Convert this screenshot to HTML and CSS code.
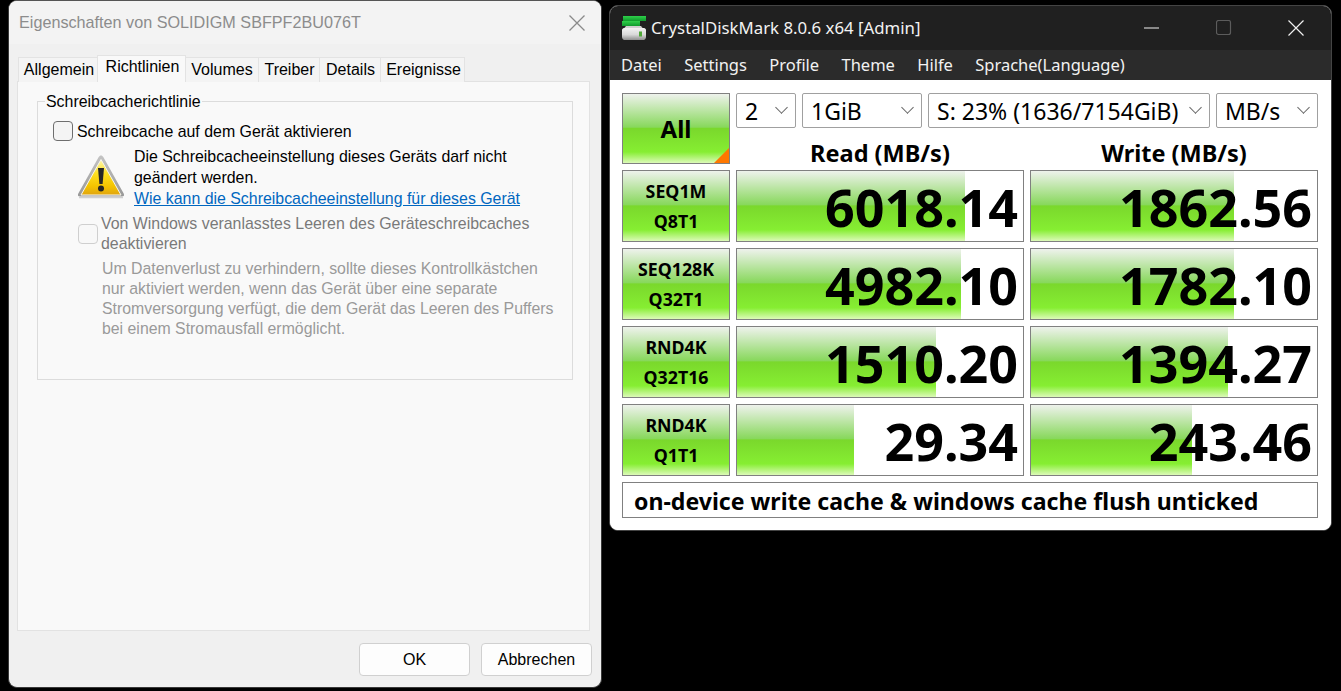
FILE: index.html
```html
<!DOCTYPE html>
<html lang="de">
<head>
<meta charset="utf-8">
<title>Eigenschaften und CrystalDiskMark</title>
<link rel="stylesheet" href="styles.css">
</head>
<body>
<section class="props">
  <header class="props-title">
    <span class="props-title-text">Eigenschaften von SOLIDIGM SBFPF2BU076T</span>
    <svg class="props-close" width="16" height="16" viewBox="0 0 16 16"><path d="M.5.5l15 15M15.5.5l-15 15" stroke="#8a8a8a" stroke-width="1.3" fill="none"/></svg>
  </header>
  <nav class="tabs">
    <span class="tab tab-allgemein">Allgemein</span>
    <span class="tab tab-active">Richtlinien</span>
    <span class="tab tab-volumes">Volumes</span>
    <span class="tab tab-treiber">Treiber</span>
    <span class="tab tab-details">Details</span>
    <span class="tab tab-ereignisse">Ereignisse</span>
  </nav>
  <div class="panel">
    <fieldset class="group">
      <legend class="group-legend">Schreibcacherichtlinie</legend>
      <div class="check-row check-first">
        <span class="box"></span>
        <span class="check-label">Schreibcache auf dem Gerät aktivieren</span>
      </div>
      <div class="warn">
        <svg class="warn-icon" width="50" height="46" viewBox="0 0 50 46">
          <defs>
            <linearGradient id="wy" x1="0" y1="0" x2="0" y2="1">
              <stop offset="0" stop-color="#fff6b0"/>
              <stop offset=".4" stop-color="#fde020"/>
              <stop offset=".75" stop-color="#f4c400"/>
              <stop offset="1" stop-color="#e0a410"/>
            </linearGradient>
            <linearGradient id="wb" x1="0" y1="0" x2="0" y2="1">
              <stop offset="0" stop-color="#c4c4c4"/>
              <stop offset="1" stop-color="#989898"/>
            </linearGradient>
          </defs>
          <path d="M25 1.500c1 0 1.700.6 2.300 1.600l20.400 36.500c.9 1.700.2 3-1.700 3H4c-1.900 0-2.600-1.300-1.700-3L22.700 3.100c.6-1 1.300-1.600 2.300-1.600z" fill="url(#wb)"/>
          <path d="M25 5.500L45 41H5z" fill="url(#wy)" stroke="#f6f6f0" stroke-width="1"/>
          <path d="M3 43.500h44" stroke="#d0d0d0" stroke-width="1.500"/>
          <path d="M22 14h6l-1.400 16h-3.200z" fill="#262626"/>
          <circle cx="25" cy="34.500" r="3" fill="#262626"/>
        </svg>
        <div class="warn-text">
          <p class="warn-line">Die Schreibcacheeinstellung dieses Geräts darf nicht geändert werden.</p>
          <a class="warn-link" href="#">Wie kann die Schreibcacheeinstellung für dieses Gerät</a>
        </div>
      </div>
      <div class="check-row check-disabled">
        <span class="box box-disabled"></span>
        <span class="check-long">Von Windows veranlasstes Leeren des Geräteschreibcaches deaktivieren</span>
      </div>
      <p class="hint">Um Datenverlust zu verhindern, sollte dieses Kontrollkästchen nur aktiviert werden, wenn das Gerät über eine separate Stromversorgung verfügt, die dem Gerät das Leeren des Puffers bei einem Stromausfall ermöglicht.</p>
    </fieldset>
  </div>
  <footer class="props-foot">
    <button class="btn">OK</button>
    <button class="btn">Abbrechen</button>
  </footer>
</section>

<section class="cdm">
  <header class="cdm-title">
    <svg class="cdm-logo" width="26" height="24" viewBox="0 0 26 24">
      <defs>
        <linearGradient id="dk" x1="0" y1="0" x2="0" y2="1">
          <stop offset="0" stop-color="#f2f2f2"/>
          <stop offset=".55" stop-color="#d8d8d8"/>
          <stop offset="1" stop-color="#8e8e8e"/>
        </linearGradient>
        <linearGradient id="gb" x1="0" y1="0" x2="0" y2="1">
          <stop offset="0" stop-color="#2fd04a"/>
          <stop offset="1" stop-color="#0f9a2c"/>
        </linearGradient>
      </defs>
      <path d="M2 0h23v5H2z" fill="url(#gb)"/>
      <path d="M1 5h18v5H1z" fill="url(#gb)"/>
      <path d="M5 10h15l2 2.500H3z" fill="#cfcfcf"/>
      <path d="M3 12h20c1 0 2 1 2 2v7c0 1.500-1 3-2.500 3h-19C2 24 1 22.500 1 21v-7c0-1 1-2 2-2z" fill="url(#dk)"/>
      <path d="M18 15.500h3v5h-3z" fill="#4fa838"/>
    </svg>
    <span class="cdm-title-text">CrystalDiskMark 8.0.6 x64 [Admin]</span>
    <div class="cdm-controls">
      <svg width="16" height="16" viewBox="0 0 16 16"><path d="M0 8h15" stroke="#f0f0f0" stroke-width="1.100"/></svg>
      <svg width="16" height="16" viewBox="0 0 16 16"><rect x=".5" y=".5" width="14" height="14" rx="2" fill="none" stroke="#5c5c5c" stroke-width="1.200"/></svg>
      <svg width="16" height="16" viewBox="0 0 16 16"><path d="M.5.500l15 15M15.500.500l-15 15" stroke="#f0f0f0" stroke-width="1.200" fill="none"/></svg>
    </div>
  </header>
  <nav class="cdm-menu">
    <span>Datei</span><span>Settings</span><span>Profile</span><span>Theme</span><span>Hilfe</span><span>Sprache(Language)</span>
  </nav>
  <main class="cdm-body">
    <button class="all"><span class="all-text">All</span></button>
    <div class="selects">
      <span class="sel sel-count">2</span>
      <span class="sel sel-size">1GiB</span>
      <span class="sel sel-drive">S: 23% (1636/7154GiB)</span>
      <span class="sel sel-unit">MB/s</span>
    </div>
    <div class="head">Read (MB/s)</div>
    <div class="head">Write (MB/s)</div>

    <div class="label"><span>SEQ1M</span><span>Q8T1</span></div>
    <div class="val" style="background-size:228px 100%">6018.14</div>
    <div class="val" style="background-size:203px 100%">1862.56</div>

    <div class="label"><span>SEQ128K</span><span>Q32T1</span></div>
    <div class="val" style="background-size:224px 100%">4982.10</div>
    <div class="val" style="background-size:203px 100%">1782.10</div>

    <div class="label"><span>RND4K</span><span>Q32T16</span></div>
    <div class="val" style="background-size:199px 100%">1510.20</div>
    <div class="val" style="background-size:197px 100%">1394.27</div>

    <div class="label"><span>RND4K</span><span>Q1T1</span></div>
    <div class="val" style="background-size:117px 100%">29.34</div>
    <div class="val" style="background-size:161px 100%">243.46</div>

    <div class="comment">on-device write cache &amp; windows cache flush unticked</div>
  </main>
</section>
</body>
</html>
```
FILE: styles.css
```css
* { box-sizing: border-box; }
html, body { margin: 0; padding: 0; height: 100%; }
body { background: #000; overflow: hidden; position: relative; }

/* Left window */
.props {
  position: absolute; left: 8px; top: 0; width: 594px; height: 688px;
  display: flex; flex-direction: column;
  background: #f0f0f0; border-radius: 9px; border: 1px solid #3a3a3a; border-top-color: #555;
  font: 15.9px/20px "Liberation Sans", Arial, sans-serif; color: #000;
  overflow: hidden;
}
.props-title {
  height: 43px; flex: none; display: flex; align-items: center; justify-content: space-between;
  padding: 0 16px 2px 10px; background: #f3f3f3;
}
.props-title-text { font-size: 16.2px; color: #8c8c8c; }
.props-close { margin-top: 2px; }
.tabs { display: flex; align-items: flex-end; height: 38px; flex: none; padding: 0 0 0 10px; margin-bottom: -1px; position: relative; z-index: 1; }
.tab {
  height: 25px; padding: 2px 0 0 1px; text-align: center; background: #f4f4f4; font-size: 16px;
  border: 1px solid #e3e3e3; border-bottom: 0; margin-left: -1px;
}
.tab-allgemein { width: 80px; padding-left: 2px; }
.tab-active { width: 89px; height: 27px; padding: 1px 0 0 2px; background: #f9f9f9; }
.tab-volumes { width: 74px; padding-left: 0; }
.tab-treiber { width: 62px; }
.tab-details { width: 62px; }
.tab-ereignisse { width: 85px; padding-left: 2px; }
.panel {
  flex: none; margin-left: 8px; width: 573px; height: 550px;
  background: #f9f9f9; border: 1px solid #e2e2e2; padding: 10px 16px 0 19px;
}
.group {
  margin: 0; height: 288px; width: 536px; padding: 0 14px 0 15px;
  border: 1px solid #dcdcdc; min-width: 0;
}
.group-legend { padding: 0 1px; margin-left: -8px; height: 18px; line-height: 20px; }
.check-row { display: flex; align-items: flex-start; gap: 4px; }
.check-first { margin-top: 11px; }
.check-label { padding-top: 1px; }
.box { width: 20px; height: 20px; flex: none; background: #f4f4f4; border: 1px solid #6e6e6e; border-radius: 4px; }
.warn { display: flex; margin-top: 4px; margin-left: 23px; gap: 8px; }
.warn-icon { flex: none; margin-top: 8px; }
.warn-text { width: 400px; }
.warn-line { margin: 0; line-height: 21px; }
.warn-link { color: #0067c0; text-decoration: underline; line-height: 21px; display: block; }
.check-disabled { margin-left: 25px; margin-top: 5px; color: #7a7a7a; gap: 3px; align-items: center; }
.box-disabled { background: #f8f8f8; border-color: #cfcfcf; }
.check-long { width: 440px; }
.hint { margin: 5px 0 0 49px; width: 458px; color: #9a9a9a; font-size: 15.85px; }
.props-foot { flex: none; display: flex; justify-content: flex-end; gap: 11px; padding: 12px 9px 0 0; }
.btn {
  width: 111px; height: 33px; padding: 0; background: #fdfdfd; border: 1px solid #d0d0d0; border-radius: 4px;
  font: 16px "Liberation Sans", Arial, sans-serif; color: #000;
}

/* Right window */
.cdm {
  position: absolute; left: 609px; top: 5px; width: 723px; height: 526px;
  display: flex; flex-direction: column;
  background: #fff; border-radius: 9px; border: 1px solid #444; overflow: hidden;
  font-family: "Noto Sans", sans-serif;
}
.cdm-title { height: 44px; flex: none; display: flex; align-items: center; background: #202020; color: #f2f2f2; padding-left: 11px; }
.cdm-logo { flex: none; margin: -1px 4px 0 0; }
.cdm-title-text { font-size: 16.8px; line-height: 22px; }
.cdm-controls { margin-left: auto; display: flex; gap: 56px; padding-right: 27px; }
.cdm-menu { height: 30px; flex: none; background: #2b2b2b; color: #f2f2f2; display: flex; align-items: center; gap: 22.3px; padding: 0 0 2px 11px; font-size: 16.5px; }
.cdm-body {
  flex: 1; display: grid; padding: 13px 12px 0;
  grid-template-columns: 108px 288px 288px; column-gap: 6px;
  grid-template-rows: 35px 30px repeat(4, 72px) 36px; row-gap: 6px;
  background: #fff;
}
.all, .label {
  border: 1px solid #808080; padding: 0;
  background: linear-gradient(#eef2ec 0, #88d85c 48%, #7ad82c 50%, #86ee32 84%, #dcfab8 100%);
}
.all { grid-row: 1 / span 2; position: relative; font: bold 24px "Noto Sans", sans-serif; color: #000; }
.all::after {
  content: ""; position: absolute; right: 0; bottom: 0;
  border-style: solid; border-width: 0 0 15px 15px; border-color: transparent transparent #ff7800 transparent;
}
.selects { grid-column: 2 / span 2; display: flex; gap: 6px; }
.sel {
  position: relative; display: flex; align-items: center; padding: 0 0 0 8px;
  border: 1px solid #a0a0a0; border-radius: 2px; font-size: 23px; color: #000; background: #fff;
}
.sel::after {
  content: ""; position: absolute; right: 9px; top: 9px; width: 8px; height: 8px;
  border-right: 1px solid #666; border-bottom: 1px solid #666; transform: rotate(45deg);
}
.sel-count { width: 60px; }
.sel-size { width: 120px; }
.sel-drive { width: 282px; }
.sel-unit { width: 102px; }
.head { font-weight: bold; font-size: 23.5px; text-align: center; line-height: 38px; height: 30px; color: #000; }
.label { display: flex; flex-direction: column; align-items: center; justify-content: center; gap: 7px; padding-top: 1px; font-weight: bold; font-size: 17.8px; line-height: 23px; color: #000; }
.val {
  border: 1px solid #808080; text-align: right; padding-right: 5px; font-weight: bold; font-size: 52px; line-height: 72px; color: #000;
  background: linear-gradient(#eef2ec 0, #88d85c 48%, #7ad82c 50%, #86ee32 84%, #dcfab8 100%) no-repeat left top, #fff;
}
.comment {
  grid-column: 1 / span 3; border: 1px solid #808080; padding-left: 11px;
  font-weight: bold; font-size: 23.1px; line-height: 36px; color: #000;
}
```
